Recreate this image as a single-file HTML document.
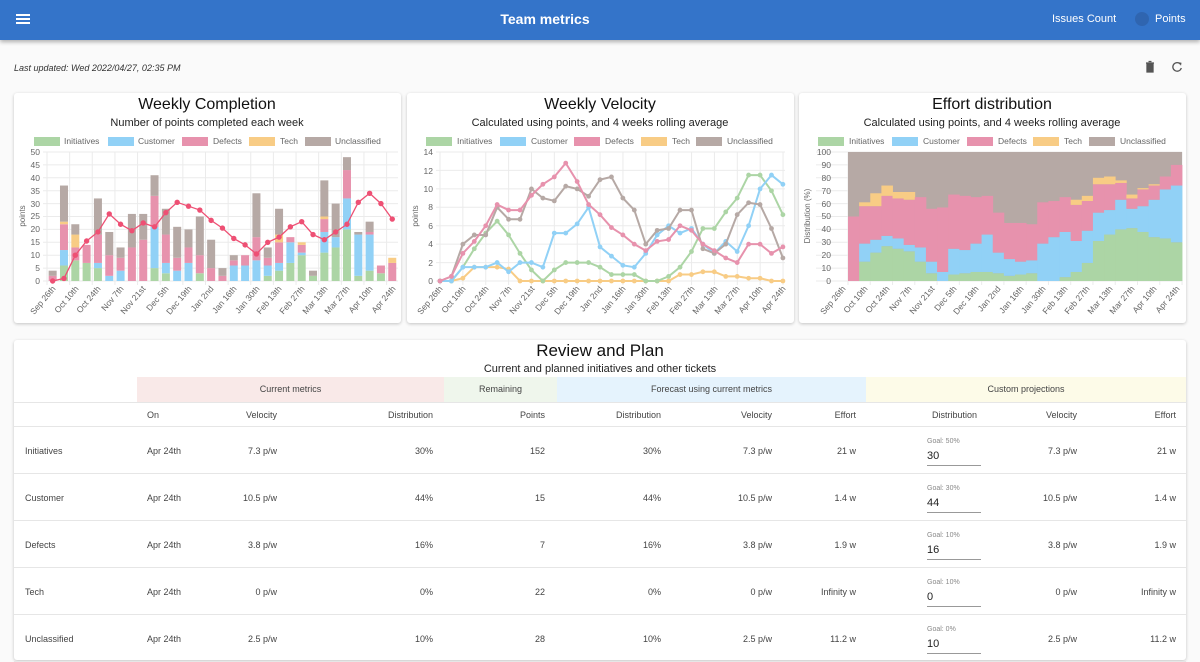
<!DOCTYPE html>
<html><head><meta charset="utf-8">
<style>
*{margin:0;padding:0;box-sizing:border-box}
body{width:1200px;height:640px;overflow:hidden;background:#fafafa;font-family:"Liberation Sans",Arial,sans-serif;position:relative;color:#333}
.bar{position:absolute;left:0;top:0;width:1200px;height:40px;background:#3474c9;box-shadow:0 2px 4px rgba(0,0,0,.3);color:#fff}
.card{position:absolute;background:#fff;border-radius:3px;box-shadow:0 1px 3px rgba(0,0,0,.22)}
.abs{position:absolute;white-space:nowrap}
svg text{font-family:"Liberation Sans",Arial,sans-serif}
.t{font-size:10px;color:#444}
.r{text-align:right}
</style></head><body>
<div class="bar">
 <div class="abs" style="left:16px;top:14px;width:14px;height:2px;background:#fff;box-shadow:0 4px 0 #fff,0 8px 0 #fff"></div>
 <div class="abs" style="left:0;width:1090px;text-align:center;top:11px;font-size:14px;font-weight:bold;">Team metrics</div>
 <div class="abs" style="left:1052px;top:13px;font-size:11px">Issues Count</div>
 <div class="abs" style="left:1135px;top:12px;width:14px;height:14px;border-radius:50%;background:#2f65b0"></div>
 <div class="abs" style="left:1155px;top:13px;font-size:11px">Points</div>
</div>
<div class="abs" style="left:14px;top:63px;font-size:9px;font-style:italic;color:#333">Last updated: Wed 2022/04/27, 02:35 PM</div>
<svg class="abs" style="left:1144px;top:60px" width="44" height="14" viewBox="0 0 44 14"><path d="M2 3h8M4.5 1.5h3M3 4h6v8H3z" fill="#555" stroke="#555" stroke-width="1.3"/><path d="M36.5 4.2A4.3 4.3 0 1 0 37.3 8" fill="none" stroke="#555" stroke-width="1.3"/><path d="M34.5 2.2l3 .5-.5 3z" fill="#555"/></svg>

<div class="card" style="left:14px;top:93px;width:387px;height:230px"></div>
<div class="card" style="left:407px;top:93px;width:387px;height:230px"></div>
<div class="card" style="left:799px;top:93px;width:387px;height:230px"></div>

<svg class="abs" style="left:0;top:0" width="1200" height="330">
<g font-size="16" fill="#111" text-anchor="middle"><text x="207" y="109">Weekly Completion</text><text x="600" y="109">Weekly Velocity</text><text x="992" y="109">Effort distribution</text></g>
<g font-size="11" fill="#222" text-anchor="middle"><text x="207" y="126">Number of points completed each week</text><text x="600" y="126">Calculated using points, and 4 weeks rolling average</text><text x="992" y="126">Calculated using points, and 4 weeks rolling average</text></g>
<g id="leg" font-size="8.5" fill="#666"></g>
<g id="g1"></g><g id="g2"></g><g id="g3"></g>
<g font-size="8.5" fill="#666" text-anchor="end">
<text x="40" y="284">0</text><text x="40" y="271">5</text><text x="40" y="258">10</text><text x="40" y="245">15</text><text x="40" y="232">20</text><text x="40" y="219">25</text><text x="40" y="207">30</text><text x="40" y="194">35</text><text x="40" y="181">40</text><text x="40" y="168">45</text><text x="40" y="155">50</text>
<text x="433" y="284">0</text><text x="433" y="266">2</text><text x="433" y="247">4</text><text x="433" y="229">6</text><text x="433" y="210">8</text><text x="433" y="192">10</text><text x="433" y="174">12</text><text x="433" y="155">14</text>
<text x="831" y="284">0</text><text x="831" y="271">10</text><text x="831" y="258">20</text><text x="831" y="245">30</text><text x="831" y="232">40</text><text x="831" y="219">50</text><text x="831" y="207">60</text><text x="831" y="194">70</text><text x="831" y="181">80</text><text x="831" y="168">90</text><text x="831" y="155">100</text>
</g>
<g font-size="8" fill="#666" text-anchor="middle">
<text transform="translate(25,216) rotate(-90)">points</text>
<text transform="translate(418,216) rotate(-90)">points</text>
<text transform="translate(810,216) rotate(-90)">Distribution (%)</text>
</g>
<g font-size="8.5" fill="#666" text-anchor="end">
<text transform="translate(56,289) rotate(-50)">Sep 26th</text><text transform="translate(79,289) rotate(-50)">Oct 10th</text><text transform="translate(101,289) rotate(-50)">Oct 24th</text><text transform="translate(124,289) rotate(-50)">Nov 7th</text><text transform="translate(146,289) rotate(-50)">Nov 21st</text><text transform="translate(169,289) rotate(-50)">Dec 5th</text><text transform="translate(192,289) rotate(-50)">Dec 19th</text><text transform="translate(214,289) rotate(-50)">Jan 2nd</text><text transform="translate(237,289) rotate(-50)">Jan 16th</text><text transform="translate(260,289) rotate(-50)">Jan 30th</text><text transform="translate(282,289) rotate(-50)">Feb 13th</text><text transform="translate(305,289) rotate(-50)">Feb 27th</text><text transform="translate(328,289) rotate(-50)">Mar 13th</text><text transform="translate(350,289) rotate(-50)">Mar 27th</text><text transform="translate(373,289) rotate(-50)">Apr 10th</text><text transform="translate(396,289) rotate(-50)">Apr 24th</text>
<text transform="translate(443,289) rotate(-50)">Sep 26th</text><text transform="translate(466,289) rotate(-50)">Oct 10th</text><text transform="translate(489,289) rotate(-50)">Oct 24th</text><text transform="translate(512,289) rotate(-50)">Nov 7th</text><text transform="translate(535,289) rotate(-50)">Nov 21st</text><text transform="translate(558,289) rotate(-50)">Dec 5th</text><text transform="translate(580,289) rotate(-50)">Dec 19th</text><text transform="translate(603,289) rotate(-50)">Jan 2nd</text><text transform="translate(626,289) rotate(-50)">Jan 16th</text><text transform="translate(649,289) rotate(-50)">Jan 30th</text><text transform="translate(672,289) rotate(-50)">Feb 13th</text><text transform="translate(695,289) rotate(-50)">Feb 27th</text><text transform="translate(718,289) rotate(-50)">Mar 13th</text><text transform="translate(740,289) rotate(-50)">Mar 27th</text><text transform="translate(763,289) rotate(-50)">Apr 10th</text><text transform="translate(786,289) rotate(-50)">Apr 24th</text>
<text transform="translate(846,289) rotate(-50)">Sep 26th</text><text transform="translate(868,289) rotate(-50)">Oct 10th</text><text transform="translate(890,289) rotate(-50)">Oct 24th</text><text transform="translate(912,289) rotate(-50)">Nov 7th</text><text transform="translate(935,289) rotate(-50)">Nov 21st</text><text transform="translate(957,289) rotate(-50)">Dec 5th</text><text transform="translate(979,289) rotate(-50)">Dec 19th</text><text transform="translate(1001,289) rotate(-50)">Jan 2nd</text><text transform="translate(1024,289) rotate(-50)">Jan 16th</text><text transform="translate(1046,289) rotate(-50)">Jan 30th</text><text transform="translate(1068,289) rotate(-50)">Feb 13th</text><text transform="translate(1090,289) rotate(-50)">Feb 27th</text><text transform="translate(1113,289) rotate(-50)">Mar 13th</text><text transform="translate(1135,289) rotate(-50)">Mar 27th</text><text transform="translate(1157,289) rotate(-50)">Apr 10th</text><text transform="translate(1180,289) rotate(-50)">Apr 24th</text>
</g>
<g font-size="8.5" fill="#666">
<text x="64" y="144">Initiatives</text><text x="138" y="144">Customer</text><text x="213" y="144">Defects</text><text x="280" y="144">Tech</text><text x="335" y="144">Unclassified</text>
<text x="457" y="144">Initiatives</text><text x="531" y="144">Customer</text><text x="605" y="144">Defects</text><text x="672" y="144">Tech</text><text x="727" y="144">Unclassified</text>
<text x="849" y="144">Initiatives</text><text x="923" y="144">Customer</text><text x="998" y="144">Defects</text><text x="1064" y="144">Tech</text><text x="1120" y="144">Unclassified</text>
</g>
</svg>

<div class="card" style="left:14px;top:340px;width:1172px;height:320px"></div>
<div class="abs" style="left:14px;width:1172px;text-align:center;top:341px;font-size:17px;color:#111">Review and Plan</div>
<div class="abs" style="left:14px;width:1172px;text-align:center;top:363px;font-size:11px;color:#222">Current and planned initiatives and other tickets</div>
<div class="abs t" style="left:137px;top:377px;width:307px;height:25px;background:#f9e9e8;text-align:center;line-height:25px;font-size:9px">Current metrics</div>
<div class="abs t" style="left:444px;top:377px;width:113px;height:25px;background:#eff6ec;text-align:center;line-height:25px;font-size:9px">Remaining</div>
<div class="abs t" style="left:557px;top:377px;width:309px;height:25px;background:#e5f3fd;text-align:center;line-height:25px;font-size:9px">Forecast using current metrics</div>
<div class="abs t" style="left:866px;top:377px;width:320px;height:25px;background:#fdfbe8;text-align:center;line-height:25px;font-size:9px">Custom projections</div>
<div id="tbl"></div>
<script>
var C=['#acd5a5','#91d1f6','#e792ad','#f8cc85','#b6a9a5'];
function el(p,t,a){var e=document.createElementNS('http://www.w3.org/2000/svg',t);for(var k in a)e.setAttribute(k,a[k]);p.appendChild(e);return e}
var leg=document.getElementById('leg');
[[34,108,182,249,305],[426,500,574,641,696],[818,892,967,1033,1089]].forEach(function(r){r.forEach(function(x,i){el(leg,'rect',{x:x,y:137,width:26,height:9,fill:C[i]})})});
function grid(g,x0,x1,n,xs){for(var i=0;i<=n;i++){var y=281-129*i/n;el(g,'line',{x1:x0-4,x2:x1,y1:y,y2:y,stroke:'#ebebeb'})}xs.forEach(function(x){el(g,'line',{x1:x,x2:x,y1:152,y2:285,stroke:'#ebebeb'})})}
// chart1
var g1=document.getElementById('g1');var xs=[];for(var k=0;k<16;k++)xs.push(47+22.64*k);
grid(g1,47,398,10,xs);
var B=[[0,0,2,0,2],[6,6,10,1,14],[8,0,5,5,4],[7,0,7,0,0],[5,2,11,0,14],[0,2,8,0,9],[0,4,5,0,4],[0,0,13,0,13],[0,0,16,0,10],[5,16,12,0,8],[3,4,11,0,10],[0,4,5,0,12],[0,7,6,0,7],[3,0,7,0,15],[0,0,5,0,11],[0,0,2,0,3],[0,6,2,0,2],[0,6,4,0,0],[0,8,9,0,17],[2,4,3,0,4],[4,3,8,3,10],[7,8,2,0,0],[10,1,3,1,0],[2,0,0,0,2],[11,8,5,1,14],[13,4,0,0,13],[20,12,11,0,5],[2,16,0,0,1],[4,14,1,0,4],[3,0,3,0,0],[0,0,7,2,0]];
var s=11.32,py=2.58;
B.forEach(function(b,i){var cx=47+s*(i+.5),y=281;b.forEach(function(v,j){if(v){el(g1,'rect',{x:cx-4,y:y-v*py,width:8,height:v*py,fill:C[j]});y-=v*py}})});
var L=[0,1,10,15.5,19,26,22,19.5,22.5,21,26.5,30.5,29,27.5,23.5,20.5,16.5,14,10.5,15,17,21,23,18,16,19,22,30.5,34,30,24];
el(g1,'polyline',{points:L.map(function(v,i){return (47+s*(i+.5))+','+(281-v*py)}).join(' '),fill:'none',stroke:'#ee5074','stroke-width':1.3});
L.forEach(function(v,i){el(g1,'circle',{cx:47+s*(i+.5),cy:281-v*py,r:2.7,fill:'#ee5074'})});
// chart2
var g2=document.getElementById('g2');xs=[];for(k=0;k<16;k++)xs.push(440+22.87*k);grid(g2,440,785,7,xs);
var V=[[0,0,1.5,3.5,5.2,6.5,5,3,1.2,0,1.2,2,2,2,1.5,.7,.7,.7,0,0,.5,1.5,3.2,5.7,5.7,7.5,9,11.5,11.5,9.8,7.2],
[0,0,1.5,1.5,1.5,2,1,2,2,1.5,5.2,5.2,6.2,8,3.7,2.7,1.7,1.5,3,5,6,5.2,5.7,4,3,4.3,3.2,6,10,11.5,10.5],
[0,.5,3,4.3,6,8.3,7.7,7.7,9.3,10.5,11.3,12.8,10.8,8.3,7.2,5.8,5,4,3.3,4.3,4.5,6,5.5,4,3.3,2.5,2,4,4,3,3.7],
[0,0,.3,1.5,1.5,1.5,1.3,0,0,0,0,0,0,0,0,0,0,0,0,0,0,.7,.7,1,1,.5,.5,.3,.3,0,0],
[0,.5,4,5,5,8,6.7,6.7,10,9,8.7,10.3,10,9.2,11,11.3,9,7.7,4,5.5,5.7,7.7,7.7,3.5,3,4,7.2,8.5,8.3,5.7,2.5]];
var order=[3,0,1,4,2];
order.forEach(function(j){var d=V[j],c=C[j];el(g2,'polyline',{points:d.map(function(v,i){return (440+11.43*i)+','+(281-v*9.21)}).join(' '),fill:'none',stroke:c,'stroke-width':2});d.forEach(function(v,i){el(g2,'circle',{cx:440+11.43*i,cy:281-v*9.21,r:2.4,fill:c})})});
// chart3
var g3=document.getElementById('g3');xs=[];for(k=0;k<16;k++)xs.push(848+22.27*k);grid(g3,820,1182,10,xs);
el(g3,'rect',{x:848,y:152,width:334,height:129,fill:C[4]});
var E=[[0,0,50,50],[15,29,58,61],[22,32,58,68],[27,35,66,74],[25,33,64,69],[23,28,63,69],[15,26,65,65],[6,15,56,56],[0,7,57,57],[5,25,67,67],[6,24,66,66],[7,29,65,65],[7,36,66,66],[6,22,53,53],[4,17,45,45],[5,15,45,45],[6,16,44,44],[0,29,61,61],[0,34,62,62],[3,38,65,65],[7,31,59,63],[14,39,62,66],[31,53,75,80],[36,55,75,81],[40,63,76,78],[41,56,64,67],[38,58,71,72],[34,63,74,75],[33,71,81,81],[30,74,90,90]];
var w=334/30;
E.forEach(function(e,i){var x=848+w*i;var prev=0;[0,1,2,3].forEach(function(j){var v=e[j];if(v>prev){el(g3,'rect',{x:x,y:281-v*1.29,width:w+.4,height:(v-prev)*1.29,fill:C[j]})}prev=Math.max(prev,v)})});
</script>

<div style="position:absolute;left:14px;top:402px;width:1172px;height:240px;font-size:9px;color:#444">
 <div style="position:absolute;left:0;top:0;width:1172px;height:25px;border-top:1px solid #e6e6e6;border-bottom:1px solid #e6e6e6"></div>
 <div class="abs" style="left:133px;top:8px">On</div>
 <div class="abs r" style="right:909px;top:8px">Velocity</div>
 <div class="abs r" style="right:753px;top:8px">Distribution</div>
 <div class="abs r" style="right:641px;top:8px">Points</div>
 <div class="abs r" style="right:525px;top:8px">Distribution</div>
 <div class="abs r" style="right:414px;top:8px">Velocity</div>
 <div class="abs r" style="right:330px;top:8px">Effort</div>
 <div class="abs" style="left:918px;top:8px">Distribution</div>
 <div class="abs r" style="right:109px;top:8px">Velocity</div>
 <div class="abs r" style="right:10px;top:8px">Effort</div>
</div>
<style>
.row{position:absolute;left:14px;width:1172px;height:47px;border-bottom:1px solid #e6e6e6;font-size:9px;color:#444}
.row div{position:absolute;top:19px;white-space:nowrap}
.row .g{top:11px;left:913px;font-size:7px;color:#888}
.row .in{top:23px;left:913px;width:54px;height:16px;border-bottom:1px solid #999;font-size:11px;color:#222;padding-top:0}
</style>
<div class="row" style="top:427px"><div style="left:11px">Initiatives</div><div style="left:133px">Apr 24th</div><div class="r" style="right:909px">7.3 p/w</div><div class="r" style="right:753px">30%</div><div class="r" style="right:641px">152</div><div class="r" style="right:525px">30%</div><div class="r" style="right:414px">7.3 p/w</div><div class="r" style="right:330px">21 w</div><div class="g">Goal: 50%</div><div class="in">30</div><div class="r" style="right:109px">7.3 p/w</div><div class="r" style="right:10px">21 w</div></div>
<div class="row" style="top:474px"><div style="left:11px">Customer</div><div style="left:133px">Apr 24th</div><div class="r" style="right:909px">10.5 p/w</div><div class="r" style="right:753px">44%</div><div class="r" style="right:641px">15</div><div class="r" style="right:525px">44%</div><div class="r" style="right:414px">10.5 p/w</div><div class="r" style="right:330px">1.4 w</div><div class="g">Goal: 30%</div><div class="in">44</div><div class="r" style="right:109px">10.5 p/w</div><div class="r" style="right:10px">1.4 w</div></div>
<div class="row" style="top:521px"><div style="left:11px">Defects</div><div style="left:133px">Apr 24th</div><div class="r" style="right:909px">3.8 p/w</div><div class="r" style="right:753px">16%</div><div class="r" style="right:641px">7</div><div class="r" style="right:525px">16%</div><div class="r" style="right:414px">3.8 p/w</div><div class="r" style="right:330px">1.9 w</div><div class="g">Goal: 10%</div><div class="in">16</div><div class="r" style="right:109px">3.8 p/w</div><div class="r" style="right:10px">1.9 w</div></div>
<div class="row" style="top:568px"><div style="left:11px">Tech</div><div style="left:133px">Apr 24th</div><div class="r" style="right:909px">0 p/w</div><div class="r" style="right:753px">0%</div><div class="r" style="right:641px">22</div><div class="r" style="right:525px">0%</div><div class="r" style="right:414px">0 p/w</div><div class="r" style="right:330px">Infinity w</div><div class="g">Goal: 10%</div><div class="in">0</div><div class="r" style="right:109px">0 p/w</div><div class="r" style="right:10px">Infinity w</div></div>
<div class="row" style="top:615px"><div style="left:11px">Unclassified</div><div style="left:133px">Apr 24th</div><div class="r" style="right:909px">2.5 p/w</div><div class="r" style="right:753px">10%</div><div class="r" style="right:641px">28</div><div class="r" style="right:525px">10%</div><div class="r" style="right:414px">2.5 p/w</div><div class="r" style="right:330px">11.2 w</div><div class="g">Goal: 0%</div><div class="in">10</div><div class="r" style="right:109px">2.5 p/w</div><div class="r" style="right:10px">11.2 w</div></div>
</body></html>
